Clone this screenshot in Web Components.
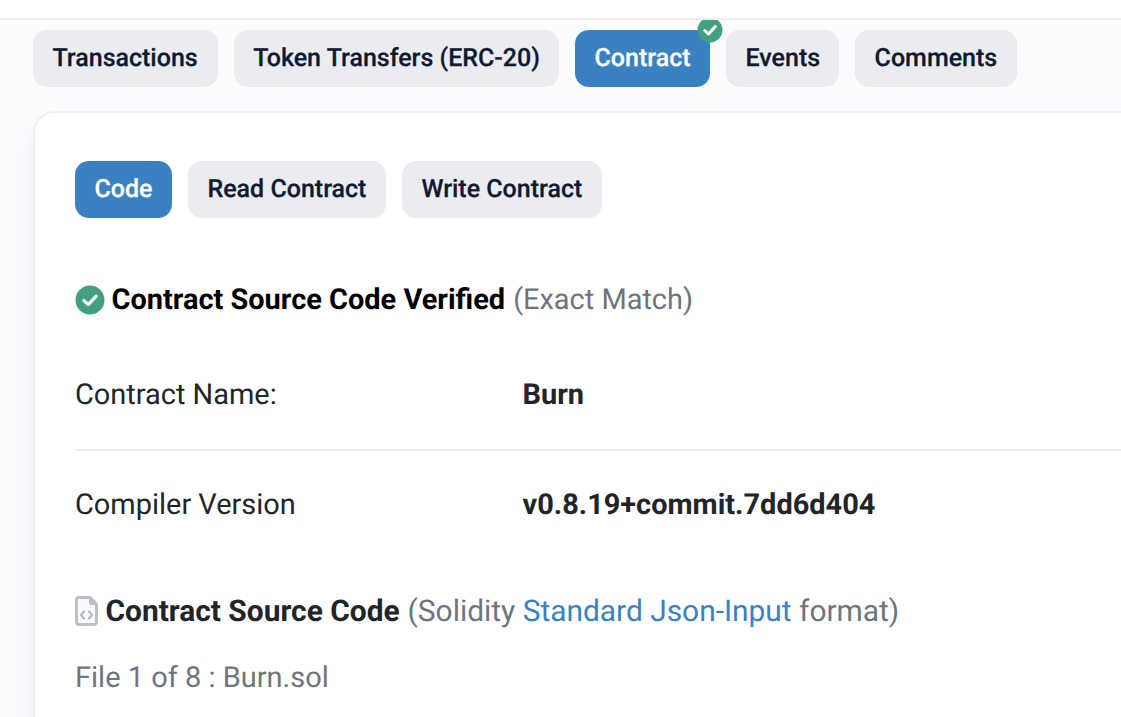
<!DOCTYPE html>
<html><head><meta charset="utf-8">
<style>
html,body{margin:0;padding:0;height:717px;overflow:hidden;background:#fbfcfe;font-family:Roboto,"Liberation Sans",sans-serif;text-rendering:geometricPrecision}
</style></head><body>
<template id="t-page"><style>
:host{display:block;height:717px;overflow:hidden}
.top{position:relative;z-index:1;height:18px;background:#fff;border-bottom:2px solid #eceef2}
.main{padding:10px 0 0 33px}
</style><div class="top"></div><div class="main"><slot></slot></div></template>

<template id="t-pills"><style>
:host{display:flex;gap:16px}
</style><slot></slot></template>

<template id="t-pill"><style>
:host{display:block;position:relative;height:57px;box-sizing:border-box;padding:0 19.5px;border-radius:14px;background:#ebecf0;color:#101a33;font:500 25px/58px Roboto,sans-serif;white-space:nowrap;-webkit-text-stroke:.25px currentColor}
:host([active]){background:#3a81c1;color:#fff}
svg{position:absolute;right:-13px;top:-13.500px;width:26px;height:26px;display:none}
:host([badge]) svg{display:block}
</style><slot></slot><svg viewBox="0 0 26 26"><circle cx="13" cy="13" r="12.5" fill="#42a07f"/><path d="M7.800 13.600l3.700 3.400 6.800-7.400" fill="none" stroke="#fff" stroke-width="3" stroke-linecap="round" stroke-linejoin="round"/></svg></template>

<template id="t-card"><style>
:host{display:block;box-sizing:border-box;margin:24px 0 0 0;padding:48px 0 0 40px;width:1200px;height:700px;background:#fff;border:2px solid #f0f1f4;border-radius:22px;box-shadow:0 14px 22px rgba(30,40,70,.05)}
</style><slot></slot></template>

<template id="t-verified"><style>
:host{display:flex;align-items:center;margin-top:62px;height:40px;font:400 28.950px/40px Roboto,sans-serif;color:#6c757d;white-space:nowrap}
svg{width:30px;height:30px;margin-right:6.500px;flex:none}
b{font-weight:700;color:#000;margin-right:8px}
</style><svg viewBox="0 0 30 30"><circle cx="15" cy="15" r="14.500" fill="#42a07f"/><path d="M9 15.600l4.200 4 8-8.400" fill="none" stroke="#fff" stroke-width="3.300" stroke-linecap="round" stroke-linejoin="round"/></svg><b><slot name="t"></slot></b><slot></slot></template>

<template id="t-row"><style>
:host{display:grid;grid-template-columns:447.500px 1fr;height:40px;font:400 28.950px/40px Roboto,sans-serif;color:#212529;white-space:nowrap}
b{font-weight:700}
</style><div><slot name="l"></slot></div><b><slot></slot></b></template>

<template id="t-source"><style>
:host{display:flex;align-items:center;height:40px;margin-top:67px;font:400 29.900px/40px Roboto,sans-serif;color:#6c757d;white-space:nowrap}
svg{width:23px;height:30px;margin:-3px 7.500px 0 0;flex:none}
b{font-weight:700;color:#212529;margin-right:8px}
::slotted(a){color:#3a81c1;text-decoration:none}
</style><svg viewBox="0 0 23 30"><path d="M3.500 1.500h11.500l6.500 6.500V26a2.500 2.500 0 0 1-2.500 2.500H4A2.500 2.500 0 0 1 1.500 26V3.500a2 2 0 0 1 2-2z" fill="#f9fafb" stroke="#bcc0c6" stroke-width="3"/><path d="M14 1.500l7.500 7.500h-5.500a2 2 0 0 1-2-2z" fill="#bcc0c6"/><path d="M9 15.500l-3 3.500 3 3.500M14 15.500l3 3.500-3 3.500" fill="none" stroke="#b4b8bf" stroke-width="2.200" stroke-linecap="round" stroke-linejoin="round"/></svg><b><slot name="t"></slot></b><span><slot></slot></span></template>

<template id="t-file"><style>
:host{display:block;margin-top:26px;height:40px;font:400 29px/40px Roboto,sans-serif;color:#6c757d}
</style><slot></slot></template>

<template id="t-rule"><style>
:host{display:block;height:2px;background:#e9ecef;margin:34px 0 34px}
</style></template>

<script>
for (const n of ['page','pills','pill','card','verified','row','source','file','rule']) {
  customElements.define('x-'+n, class extends HTMLElement {
    constructor(){super();this.attachShadow({mode:'open'}).appendChild(document.getElementById('t-'+n).content.cloneNode(true));}
  });
}
</script>

<x-page>
  <x-pills>
    <x-pill style="padding-right:20.500px">Transactions</x-pill>
    <x-pill style="padding-left:19px;padding-right:19px">Token Transfers (ERC-20)</x-pill>
    <x-pill active badge>Contract</x-pill>
    <x-pill style="padding-right:19px">Events</x-pill>
    <x-pill>Comments</x-pill>
  </x-pills>
  <x-card>
    <x-pills>
      <x-pill active>Code</x-pill>
      <x-pill>Read Contract</x-pill>
      <x-pill>Write Contract</x-pill>
    </x-pills>
    <x-verified><span slot="t">Contract Source Code Verified</span>(Exact Match)</x-verified>
    <x-row style="margin-top:55px"><span slot="l">Contract Name:</span>Burn</x-row>
    <x-rule></x-rule>
    <x-row><span slot="l">Compiler Version</span>v0.8.19+commit.7dd6d404</x-row>
    <x-source><span slot="t">Contract Source Code</span>(Solidity <a>Standard Json-Input</a> format)</x-source>
    <x-file>File 1 of 8 : Burn.sol</x-file>
  </x-card>
</x-page>
</body></html>
